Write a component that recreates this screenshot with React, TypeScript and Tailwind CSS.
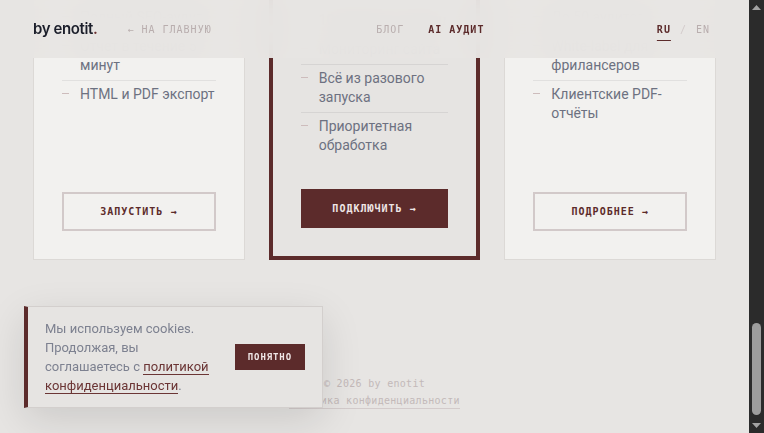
import { useLayoutEffect, useRef } from "react";

const mono = "font-['DejaVu_Sans_Mono',monospace]";

type Plan = {
  name: string;
  price: string;
  note: string;
  features: string[];
  cta: string;
  highlight?: boolean;
};

const plans: Plan[] = [
  {
    name: "Разовый запуск",
    price: "1 490 ₽",
    note: "за один аудит",
    features: ["Полный SEO-аудит", "Отчёт в течение 5\nминут", "HTML и PDF экспорт"],
    cta: "Запустить",
  },
  {
    name: "Подписка",
    price: "3 900 ₽",
    note: "в месяц",
    features: ["10 аудитов в месяц", "Мониторинг сайта", "Всё из разового запуска", "Приоритетная обработка"],
    cta: "Подключить",
    highlight: true,
  },
  {
    name: "Агентство",
    price: "от 9 900 ₽",
    note: "в месяц",
    features: ["До 50 аудитов", "White-label для\nфрилансеров", "Клиентские PDF-отчёты"],
    cta: "Подробнее",
  },
];

const steps = [
  { n: "01", title: "Вставьте ссылку", text: "Укажите адрес сайта — регистрация не нужна." },
  { n: "02", title: "AI проверяет", text: "Скорость, SEO, доступность и тексты страниц." },
  { n: "03", title: "Получите отчёт", text: "Понятный список правок с приоритетами." },
];

function Header() {
  return (
    <header className="sticky top-0 z-20 bg-[#e7e5e3]/95 backdrop-blur-md">
      <div className="flex h-[58px] items-center justify-between px-[33px]">
        <div className="flex items-center gap-[30px]">
          <a className="font-['Inter',sans-serif] text-[15px] font-semibold tracking-tight text-[#1c1f2b]">
            by enotit<span className="text-[#6b2f2f]">.</span>
          </a>
          <a className={`${mono} text-[10px] tracking-[0.1em] text-[#b9aeae]`}>← НА ГЛАВНУЮ</a>
        </div>
        <nav className={`${mono} mr-2 flex items-center gap-6 text-[10px] tracking-[0.1em]`}>
          <a className="text-[#b9aeae]">БЛОГ</a>
          <a className="font-bold text-[#5c2b2b]">AI АУДИТ</a>
        </nav>
        <div className={`${mono} mr-[6px] flex items-center gap-[9px] text-[10px] tracking-[0.1em]`}>
          <a className="font-bold text-[#5c2b2b] underline decoration-1 underline-offset-[7px]">RU</a>
          <span className="text-[#d3cbcb]">/</span>
          <a className="text-[#b9aeae]">EN</a>
        </div>
      </div>
    </header>
  );
}

function PlanCard({ plan }: { plan: Plan }) {
  const hl = plan.highlight;
  return (
    <div
      className={
        hl
          ? "flex flex-col border-4 border-[#5c2b2b] bg-[#e6e4e2] p-7"
          : "flex flex-col border border-[#dcd9d6] bg-[#f2f1ef] p-7"
      }
    >
      <div className={`${mono} text-[10px] leading-4 tracking-[0.1em] text-[#9a8d8d] uppercase`}>{plan.name}</div>
      <div className="mt-4 font-['Inter',sans-serif] text-[30px] leading-[36px] font-semibold tracking-tight text-[#1c1f2b]">
        {plan.price}
      </div>
      <div className="text-[13px] leading-5 text-[#7a7e8c]">{plan.note}</div>
      <ul className="mt-6 divide-y divide-[#1c1f2b]/[0.08]">
        {plan.features.map((f) => (
          <li key={f} className="flex py-[4.5px] text-[14px] leading-[19px] text-[#6d7181]">
            <span className="mt-[8px] mr-[11px] h-px w-[7px] shrink-0 bg-[#cdbcbc]" />
            <span className="whitespace-pre-line">{f}</span>
          </li>
        ))}
      </ul>
      <div className="mt-auto pt-[29px]">
        <button
          className={
            hl
              ? `${mono} flex w-full items-center justify-center border-2 border-[#5c2b2b] bg-[#5c2b2b] py-[10px] text-[10px] leading-[15px] font-bold tracking-[0.1em] text-[#efe6e6] uppercase`
              : `${mono} flex w-full items-center justify-center border-2 border-[#d2c9c9] bg-transparent py-[10px] text-[10px] leading-[15px] font-bold tracking-[0.1em] text-[#5c2b2b] uppercase`
          }
        >
          {plan.cta} →
        </button>
      </div>
    </div>
  );
}

function CookieBanner() {
  return (
    <div className="fixed bottom-[25px] left-6 z-30 flex w-[299px] items-center gap-6 border border-l-4 border-[#d3cfcd] border-l-[#5c2b2b] bg-[#e6e4e2] py-3 pr-[17px] pl-[17px] shadow-[0_12px_40px_rgba(0,0,0,0.12)]">
      <p className="flex-1 text-[13px] leading-[19px] text-[#7d8190]">
        Мы используем cookies. Продолжая, вы соглашаетесь с{" "}
        <a className="border-b border-[#6b3535] text-[#6b3535]">политикой конфиденциальности</a>.
      </p>
      <button className={`${mono} bg-[#5c2b2b] px-[13px] py-[6px] text-[9px] leading-[14px] font-bold tracking-[0.1em] text-[#efe6e6]`}>
        ПОНЯТНО
      </button>
    </div>
  );
}

function ScrollBar() {
  return (
    <aside className="flex w-[15px] shrink-0 flex-col items-center bg-[#2b2b2b]">
      <div className="flex h-[15px] items-center justify-center">
        <svg width="9" height="5" viewBox="0 0 9 5">
          <polygon points="4.5,0 9,5 0,5" fill="#a3a3a3" />
        </svg>
      </div>
      <div className="flex flex-1 items-end pb-[3px]">
        <div className="h-[92px] w-[9px] rounded-full bg-[#9d9d9d]" />
      </div>
      <div className="flex h-[15px] items-center justify-center">
        <svg width="9" height="5" viewBox="0 0 9 5">
          <polygon points="0,0 9,0 4.5,5" fill="#a3a3a3" />
        </svg>
      </div>
    </aside>
  );
}

export default function App() {
  const scrollRef = useRef<HTMLDivElement>(null);

  useLayoutEffect(() => {
    const el = scrollRef.current;
    if (!el) return;
    const toBottom = () => {
      el.scrollTop = el.scrollHeight;
    };
    toBottom();
    document.fonts?.ready.then(toBottom);
  }, []);

  return (
    <div className="flex h-screen bg-[#e7e5e3] font-['Roboto',sans-serif] text-[#1c1f2b]">
      <div ref={scrollRef} className="min-w-0 flex-1 overflow-y-scroll [scrollbar-width:none]">
        <Header />
        <main className="px-[33px]">
          {/* hero */}
          <section className="pt-20 pb-24">
            <div className={`${mono} text-[10px] tracking-[0.1em] text-[#9a8d8d]`}>AI АУДИТ САЙТА</div>
            <h1 className="mt-5 max-w-[520px] font-['Inter',sans-serif] text-[44px] leading-[50px] font-semibold tracking-tight">
              Аудит сайта за несколько минут
            </h1>
            <p className="mt-6 max-w-[460px] text-[16px] leading-[26px] text-[#6f7383]">
              Нейросеть проверит SEO, скорость и доступность страниц и соберёт отчёт с конкретными рекомендациями.
            </p>
            <div className="mt-10 flex max-w-[520px] gap-3">
              <div className="flex-1 border border-[#d2c9c9] bg-[#f2f1ef] px-4 py-3 text-[14px] text-[#a6a9b4]">https://example.ru</div>
              <button className={`${mono} bg-[#5c2b2b] px-6 text-[10px] font-bold tracking-[0.1em] text-[#efe6e6]`}>ПРОВЕРИТЬ →</button>
            </div>
          </section>

          {/* steps */}
          <section className="pb-24">
            <div className={`${mono} text-[10px] tracking-[0.1em] text-[#9a8d8d]`}>КАК ЭТО РАБОТАЕТ</div>
            <div className="mt-8 grid grid-cols-3 gap-6">
              {steps.map((s) => (
                <div key={s.n} className="border-t border-[#d2c9c9] pt-5">
                  <div className={`${mono} text-[10px] tracking-[0.1em] text-[#5c2b2b]`}>{s.n}</div>
                  <div className="mt-3 text-[17px] font-semibold">{s.title}</div>
                  <p className="mt-2 text-[14px] leading-[21px] text-[#6f7383]">{s.text}</p>
                </div>
              ))}
            </div>
          </section>

          {/* pricing */}
          <section className="pb-16">
            <div className={`${mono} text-[10px] tracking-[0.1em] text-[#9a8d8d]`}>ТАРИФЫ</div>
            <h2 className="mt-4 font-['Inter',sans-serif] text-[32px] leading-[40px] font-semibold tracking-tight">Выберите формат</h2>
            <div className="mt-10 grid grid-cols-3 gap-6">
              {plans.map((p) => (
                <PlanCard key={p.name} plan={p} />
              ))}
            </div>
          </section>
        </main>

        <footer className={`${mono} flex flex-col items-center gap-[3px] pt-[53px] pb-6 text-[10px] leading-[14px] tracking-[0.03em] text-[#c3b9b9]`}>
          <span>© 2026 by enotit</span>
          <a className="border-b border-[#d3cbcb]">Политика конфиденциальности</a>
        </footer>
      </div>

      <ScrollBar />
      <CookieBanner />
    </div>
  );
}
